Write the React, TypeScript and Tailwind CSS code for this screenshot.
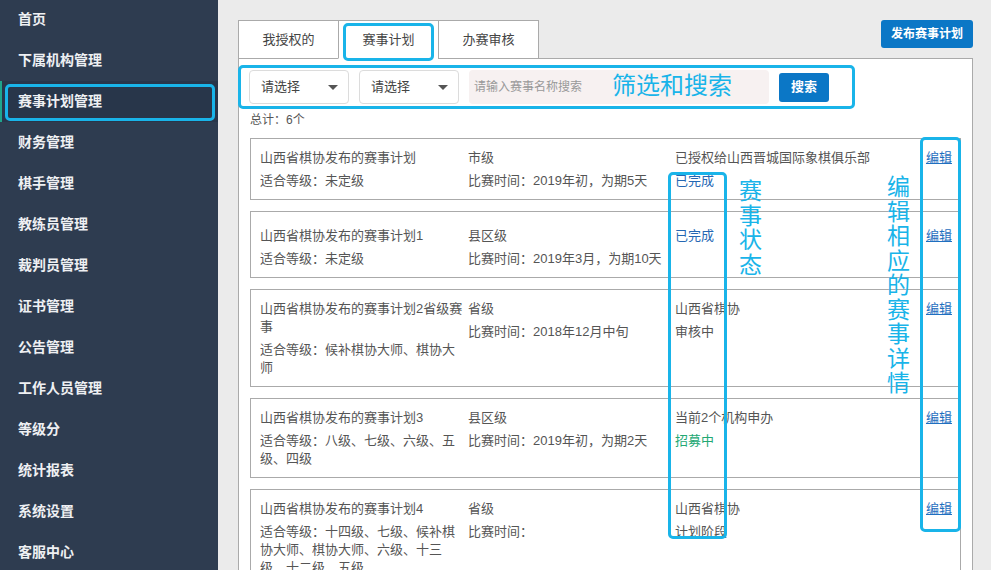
import React from 'react';

const menu = [
  '首页',
  '下属机构管理',
  '赛事计划管理',
  '财务管理',
  '棋手管理',
  '教练员管理',
  '裁判员管理',
  '证书管理',
  '公告管理',
  '工作人员管理',
  '等级分',
  '统计报表',
  '系统设置',
  '客服中心',
];

type Plan = {
  name: string;
  grade: string;
  level: string;
  time: string;
  org?: string;
  status: string;
  tone: 'blue' | 'green' | 'gray';
  roomy?: boolean;
};

const plans: Plan[] = [
  {
    name: '山西省棋协发布的赛事计划',
    grade: '适合等级：未定级',
    level: '市级',
    time: '比赛时间：2019年初，为期5天',
    org: '已授权给山西晋城国际象棋俱乐部',
    status: '已完成',
    tone: 'blue',
  },
  {
    name: '山西省棋协发布的赛事计划1',
    grade: '适合等级：未定级',
    level: '县区级',
    time: '比赛时间：2019年3月，为期10天',
    status: '已完成',
    tone: 'blue',
    roomy: true,
  },
  {
    name: '山西省棋协发布的赛事计划2省级赛事',
    grade: '适合等级：候补棋协大师、棋协大师',
    level: '省级',
    time: '比赛时间：2018年12月中旬',
    org: '山西省棋协',
    status: '审核中',
    tone: 'gray',
  },
  {
    name: '山西省棋协发布的赛事计划3',
    grade: '适合等级：八级、七级、六级、五级、四级',
    level: '县区级',
    time: '比赛时间：2019年初，为期2天',
    org: '当前2个机构申办',
    status: '招募中',
    tone: 'green',
  },
  {
    name: '山西省棋协发布的赛事计划4',
    grade: '适合等级：十四级、七级、候补棋协大师、棋协大师、六级、十三级、十二级、五级',
    level: '省级',
    time: '比赛时间：',
    org: '山西省棋协',
    status: '计划阶段',
    tone: 'gray',
  },
];

const toneClass = {
  blue: 'text-[#2467b3]',
  green: 'text-[#22a873]',
  gray: 'text-[#555]',
};

function Caret() {
  return (
    <svg width="10" height="5" viewBox="0 0 10 5" className="fill-[#555]">
      <path d="M0 0h10L5 5z" />
    </svg>
  );
}

function Select() {
  return (
    <div className="flex h-[34px] w-[100px] items-center justify-between rounded-[4px] border border-[#dcdcdc] bg-white pl-[11px] pr-[10px] text-[13px] text-[#444]">
      <span>请选择</span>
      <Caret />
    </div>
  );
}

function PlanCard({ plan }: { plan: Plan }) {
  return (
    <div
      className={
        'grid grid-cols-[208px_207px_1fr_auto] border border-[#aaa] pl-[9px] pr-[8px] text-[13px] leading-[18px] text-[#555] ' +
        (plan.roomy ? 'pt-[15px] pb-[9px]' : 'pt-[10px] pb-[9px]')
      }
    >
      <div className="flex flex-col gap-[5px] pr-[4px]">
        <div>{plan.name}</div>
        <div>{plan.grade}</div>
      </div>
      <div className="flex flex-col gap-[5px]">
        <div>{plan.level}</div>
        <div>{plan.time}</div>
      </div>
      <div className="flex flex-col gap-[5px]">
        {plan.org && <div>{plan.org}</div>}
        <div className={toneClass[plan.tone]}>{plan.status}</div>
      </div>
      <div>
        <a href="#" className="text-[#1f6fc0] underline">
          编辑
        </a>
      </div>
    </div>
  );
}

function Note({ text, className }: { text: string; className: string }) {
  return (
    <div className={'pointer-events-none absolute z-20 flex flex-col items-center text-[23px] leading-[24.5px] text-[#19b4e9] ' + className}>
      {text.split('').map((c, i) => (
        <span key={i}>{c}</span>
      ))}
    </div>
  );
}

export default function App() {
  return (
    <div
      className="relative flex h-[570px] w-full overflow-hidden"
      style={{ fontFamily: '"Liberation Sans", "Noto Sans CJK SC", sans-serif' }}
    >
      {/* sidebar */}
      <aside className="w-[218px] shrink-0 bg-[#2e3c50]">
        <ul className="-mt-px">
          {menu.map((m, i) => (
            <li
              key={m}
              className={
                'flex h-[41px] items-center text-[14px] font-bold text-[#eef0f3] ' +
                (i === 2 ? 'border-l-[2px] border-[#1fa58d] bg-[#28364a] pl-[16px]' : 'pl-[18px]')
              }
            >
              {m}
            </li>
          ))}
        </ul>
      </aside>

      {/* main */}
      <main className="flex-1 bg-[#ebebeb] pl-[20px] pr-[18px] pt-[20px]">
        <div className="flex items-start justify-between">
          <div className="relative z-10 -mb-px flex">
            <div className="flex h-[39px] w-[101px] items-center justify-center border border-[#aaa] bg-white text-[13px] text-[#444]">
              我授权的
            </div>
            <div className="-ml-px flex h-[39px] w-[101px] items-center justify-center border border-[#aaa] border-b-white bg-white text-[13px] text-[#444]">
              赛事计划
            </div>
            <div className="-ml-px flex h-[39px] w-[101px] items-center justify-center border border-[#aaa] bg-white text-[13px] text-[#444]">
              办赛审核
            </div>
          </div>
          <button className="h-[28px] w-[92px] rounded-[3px] bg-[#0b77c6] text-[12px] font-bold text-white">
            发布赛事计划
          </button>
        </div>

        <section className="h-[600px] border border-[#aaa] bg-white px-[11px] pt-[11px]">
          <div className="-ml-px flex items-center gap-[10px]">
            <Select />
            <Select />
            <div className="flex h-[34px] w-[300px] items-center rounded-[4px] bg-[#f7f1f1] pl-[5px] text-[12px] text-[#999]">
              请输入赛事名称搜索
            </div>
            <button className="h-[29px] w-[50px] rounded-[3px] bg-[#0b77c6] text-[13px] font-bold text-white">
              搜索
            </button>
          </div>
          <div className="mt-[7px] text-[12px] leading-[18px] text-[#555]">总计：6个</div>
          <div className="mt-[9px] flex flex-col gap-[11px]">
            {plans.map((p) => (
              <PlanCard key={p.name} plan={p} />
            ))}
          </div>
        </section>
      </main>

      {/* annotations */}
      <div className="pointer-events-none absolute left-[5px] top-[84px] z-20 h-[37px] w-[210px] rounded-[5px] border-[3px] border-[#19b4e9]" />
      <div className="pointer-events-none absolute left-[343px] top-[23px] z-20 h-[38px] w-[91px] rounded-[5px] border-[3px] border-[#19b4e9]" />
      <div className="pointer-events-none absolute left-[238px] top-[65px] z-20 h-[44px] w-[617px] rounded-[5px] border-[3px] border-[#19b4e9]" />
      <div className="pointer-events-none absolute left-[612px] top-[74px] z-20 text-[24px] leading-[24px] text-[#19b4e9]">
        筛选和搜索
      </div>
      <div className="pointer-events-none absolute left-[668px] top-[172px] z-20 h-[367px] w-[59px] rounded-[5px] border-[3px] border-[#19b4e9]" />
      <div className="pointer-events-none absolute left-[920px] top-[137px] z-20 h-[395px] w-[41px] rounded-[5px] border-[3px] border-[#19b4e9]" />
      <Note text="赛事状态" className="left-[739px] top-[179px]" />
      <Note text="编辑相应的赛事详情" className="left-[887px] top-[175px]" />
    </div>
  );
}
